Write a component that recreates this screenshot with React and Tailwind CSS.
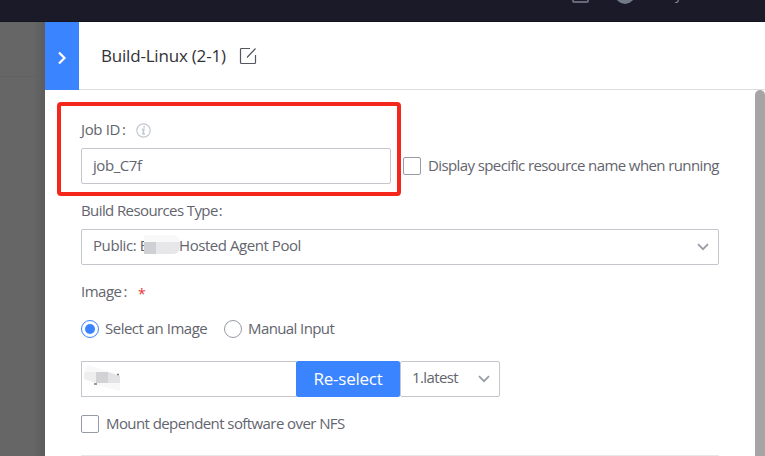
import React from 'react';

function Chevron() {
  return (
    <svg width="12" height="8" viewBox="0 0 12 8" fill="none" stroke="#979ba5" strokeWidth="1.7">
      <path d="M1 1.2L6 6.2L11 1.2" />
    </svg>
  );
}

function Check({ children, text }) {
  return (
    <label className="flex h-[18px] items-center">
      <span className="h-[18px] w-[18px] shrink-0 rounded-[2px] border border-[#979ba5] bg-white" />
      <span className={'ml-[7px] pb-[2px] ' + text}>{children}</span>
    </label>
  );
}

export default function App() {
  return (
    <div className="relative flex h-[456px] w-[765px] flex-col overflow-hidden whitespace-nowrap bg-[#666] font-['Open_Sans','Noto_Sans',sans-serif] text-[15px] leading-5 text-[#63656e]">
      <header className="flex h-[22px] shrink-0 items-start overflow-hidden border-b border-[#14131f] bg-[#1b1a29]">
        <span className="-mt-[13px] ml-[572px] h-4 w-[17px] shrink-0 rounded-[2px] border-2 border-[#686777]" />
        <span className="-mt-[16px] ml-[26px] h-5 w-5 shrink-0 rounded-full bg-[#737a87]" />
        <span className="-mt-[16px] ml-[40px] text-[14px] text-[#8b8b99]">y</span>
      </header>
      <div className="flex min-h-0 flex-1">
        <aside className="w-[45px] shrink-0 bg-linear-to-r from-[#666] from-75% to-[#5c5c5c]">
          <div className="h-[55px] border-b border-[#5f6263]" />
        </aside>
        <main className="flex min-w-0 flex-1 flex-col bg-white">
          <div className="flex h-[68px] shrink-0">
            <button className="flex w-[34px] items-center justify-center bg-[#3a84ff] pt-[3px]">
              <svg width="10" height="14" viewBox="0 0 10 14" fill="none" stroke="#fff" strokeWidth="2.2">
                <path d="M2 1.5L7.5 7L2 12.5" />
              </svg>
            </button>
            <div className="flex flex-1 items-center border-b border-[#dcdee0] pl-[22px]">
              <h1 className="w-[138px] text-[17px] tracking-[-0.2px] text-[#313238]">Build-Linux (2-1)</h1>
              <svg width="18" height="18" viewBox="0 0 18 18" fill="none" stroke="#55575f" strokeWidth="1.2">
                <path d="M11 1.5H2.5Q1.5 1.5 1.5 2.5V15.5Q1.5 16.5 2.5 16.5H15.5Q16.5 16.5 16.5 15.5V8M8 10.5L16.5 1.5" />
              </svg>
            </div>
          </div>
          <div className="flex min-h-0 flex-1">
            <div className="flex flex-1 flex-col pl-[12px] pt-[12px]">
              <div className="flex h-[94px] shrink-0 items-start">
                <section className="flex h-[94px] w-[344px] flex-col rounded-[4px] border-4 border-[#f5261b] pl-5 pt-[14px]">
                  <div className="flex h-5 items-center">
                    <span className="w-[55px] pb-[2px] tracking-[-0.35px]">Job ID<span className="ml-[2px]">:</span></span>
                    <svg width="15" height="15" viewBox="0 0 15 15" fill="none" stroke="#c4c9d2">
                      <circle cx="7.5" cy="7.5" r="6.7" strokeWidth="1.2" />
                      <path d="M8.3 3.1L8 4.7M5.8 6.4H7.8L7 10.8H8.9" strokeWidth="1.7" />
                    </svg>
                  </div>
                  <div className="mt-2 flex h-9 w-[310px] items-center rounded-[2px] border border-[#c4c6cc] pl-[11px] pb-[2px] tracking-[-0.45px]">job_C7f</div>
                </section>
                <div className="ml-[2px] mt-[55px]">
                  <Check text="tracking-[-0.6px]">Display specific resource name when running</Check>
                </div>
              </div>
              <div className="ml-6 mt-[5px] flex w-[638px] flex-col">
                <div className="-mt-px h-5 tracking-[-0.6px]">Build Resources Type<span className="ml-[1px]">:</span></div>
                <div className="mt-[9px] flex h-9 items-center rounded-[2px] border border-[#c4c6cc] pl-[11px] pr-[9px]">
                  <span className="pb-[4px] tracking-[-0.4px]">Public: B</span>
                  <span className="relative -ml-[5px] mb-[6px] flex h-[19px] w-[36px] flex-col rounded-r-[7px] bg-[#f8f8f9]">
                    <span className="mt-[7px] flex h-3"><i className="w-[12px] bg-[#cfd0d3]" /><i className="w-[24px] rounded-br-[7px] bg-[#e7e7e9]" /></span>
                  </span>
                  <span className="-ml-px pb-[4px] tracking-[-0.45px]">Hosted Agent Pool</span>
                  <span className="ml-auto"><Chevron /></span>
                </div>
                <div className="mt-[17px] flex h-5 items-center">
                  <span className="w-[57px] pb-[2px] tracking-[-0.5px]">Image<span className="ml-[2px]">:</span></span>
                  <span className="pt-1 text-[14px] text-[#ea3636]">*</span>
                </div>
                <div className="mt-[18px] flex h-[18px] items-center">
                  <span className="flex h-[18px] w-[18px] items-center justify-center rounded-full border border-[#3a84ff]"><i className="h-[10px] w-[10px] rounded-full bg-[#3a84ff]" /></span>
                  <span className="ml-[6px] w-[119px] pb-[2px] tracking-[-0.5px]">Select an Image</span>
                  <span className="h-[18px] w-[18px] rounded-full border border-[#979ba5]" />
                  <span className="ml-[6px] pb-[2px] tracking-[-0.6px]">Manual Input</span>
                </div>
                <div className="mt-[23px] flex h-9">
                  <div className="flex w-[215px] items-start border border-r-0 border-[#c4c6cc] pl-[2px] pt-[3px]">
                    <svg width="37" height="27" viewBox="0 0 37 27">
                      <path d="M4 0L36 10V26L16 21L0 13V7Z" fill="#f8f8f9" />
                      <path d="M0 7H12V18L0 14Z" fill="#eeeeef" />
                      <path d="M12 7H24V18H12Z" fill="#d2d2d5" />
                      <path d="M24 7L36 11V18H24Z" fill="#e3e3e5" />
                      <path d="M10 19H13M33 9.5H35" stroke="#777980" strokeWidth="1.5" />
                    </svg>
                  </div>
                  <button className="w-[104px] rounded-[2px] bg-[#3a84ff] text-[17px] tracking-[-0.25px] text-white">Re-select</button>
                  <div className="flex w-[100px] items-center justify-between rounded-[2px] border border-[#c4c6cc] pl-[11px] pr-[9px]">
                    <span className="pb-[4px] tracking-[-0.6px]">1.latest</span><Chevron />
                  </div>
                </div>
                <div className="mt-[18px]"><Check text="tracking-[-0.58px]">Mount dependent software over NFS</Check></div>
                <div className="mt-[22px] h-px w-full bg-[#e6e7ea]" />
              </div>
            </div>
            <div className="h-[400px] w-[10px] shrink-0 rounded-t-[5px] bg-[#a5a5a5]" />
          </div>
        </main>
      </div>
    </div>
  );
}
